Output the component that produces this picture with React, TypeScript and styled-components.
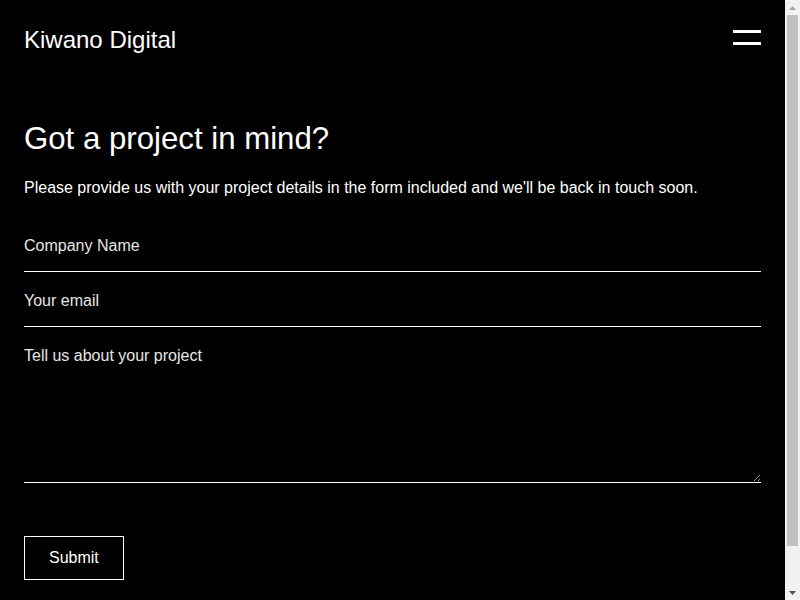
import React from "react";
import styled, { createGlobalStyle } from "styled-components";

const GlobalStyle = createGlobalStyle`
  html, body {
    margin: 0;
    padding: 0;
    background: #000;
  }
  body {
    color: #fff;
    font-family: "Liberation Sans", Arial, sans-serif;
  }
  * { box-sizing: border-box; }
`;

const Page = styled.div`
  padding-right: 15px;
`;

const Header = styled.header`
  height: 80px;
  padding: 0 24px;
  display: flex;
  align-items: center;
  justify-content: space-between;
`;

const Logo = styled.div`
  font-size: 24px;
  color: #fff;
`;

const Burger = styled.button`
  display: flex;
  flex-direction: column;
  gap: 9px;
  width: 28px;
  padding: 0 0 5px;
  border: none;
  background: transparent;
  cursor: pointer;
`;

const Bar = styled.span`
  display: block;
  width: 28px;
  height: 3px;
  background: #fff;
`;

const Main = styled.main`
  padding: 0 24px 64px;
`;

const Title = styled.h1`
  margin: 41px 0 0;
  font-size: 31.2px;
  font-weight: 400;
  line-height: normal;
`;

const Intro = styled.p`
  margin: 22px 0 0;
  font-size: 16px;
  line-height: normal;
`;

const Form = styled.form`
  margin-top: 20px;
  display: flex;
  flex-direction: column;
  align-items: flex-start;
`;

const fieldBase = `
  width: 100%;
  background: transparent;
  color: #fff;
  border: none;
  border-bottom: 1px solid #fff;
  border-radius: 0;
  font-family: "Liberation Sans", Arial, sans-serif;
  font-size: 16px;
  line-height: normal;
  outline: none;
  &::placeholder { color: #e6e6e6; opacity: 1; }
`;

const Input = styled.input`
  ${fieldBase}
  height: 55px;
  padding: 19px 0 16px;
`;

const TextArea = styled.textarea`
  ${fieldBase}
  height: 156px;
  padding: 20px 0 4px;
  display: block;
`;

const Submit = styled.button`
  margin-top: 53px;
  height: 44px;
  padding: 0 24px;
  background: transparent;
  color: #fff;
  border: 1px solid #fff;
  border-radius: 0;
  font-family: "Liberation Sans", Arial, sans-serif;
  font-size: 16px;
  cursor: pointer;
`;

/* replica of the classic browser scrollbar at the window edge */
const ScrollTrack = styled.div`
  position: fixed;
  top: 0;
  right: 0;
  width: 15px;
  height: 100vh;
  background: #f1f1f1;
  display: flex;
  flex-direction: column;
  align-items: center;
`;

const ScrollArrow = styled.div`
  height: 15px;
  width: 15px;
  display: flex;
  align-items: center;
  justify-content: center;
`;

const ScrollThumb = styled.div`
  width: 11px;
  height: 531px;
  background: #c1c1c1;
`;

const ScrollSpacer = styled.div`
  flex: 1;
`;

export default function App() {
  return (
    <>
      <GlobalStyle />
      <Page>
        <Header>
          <Logo>Kiwano Digital</Logo>
          <Burger aria-label="Menu">
            <Bar />
            <Bar />
          </Burger>
        </Header>
        <Main>
          <Title>Got a project in mind?</Title>
          <Intro>
            Please provide us with your project details in the form included and we'll be back in touch soon.
          </Intro>
          <Form onSubmit={(e) => e.preventDefault()}>
            <Input type="text" placeholder="Company Name" />
            <Input type="email" placeholder="Your email" />
            <TextArea placeholder="Tell us about your project" />
            <Submit type="submit">Submit</Submit>
          </Form>
        </Main>
      </Page>
      <ScrollTrack aria-hidden="true">
        <ScrollArrow>
          <svg width="7" height="4" viewBox="0 0 7 4">
            <polygon points="0,4 7,4 3.5,0" fill="#a3a3a3" />
          </svg>
        </ScrollArrow>
        <ScrollThumb />
        <ScrollSpacer />
        <ScrollArrow>
          <svg width="7" height="4" viewBox="0 0 7 4">
            <polygon points="0,0 7,0 3.5,4" fill="#505050" />
          </svg>
        </ScrollArrow>
      </ScrollTrack>
    </>
  );
}
